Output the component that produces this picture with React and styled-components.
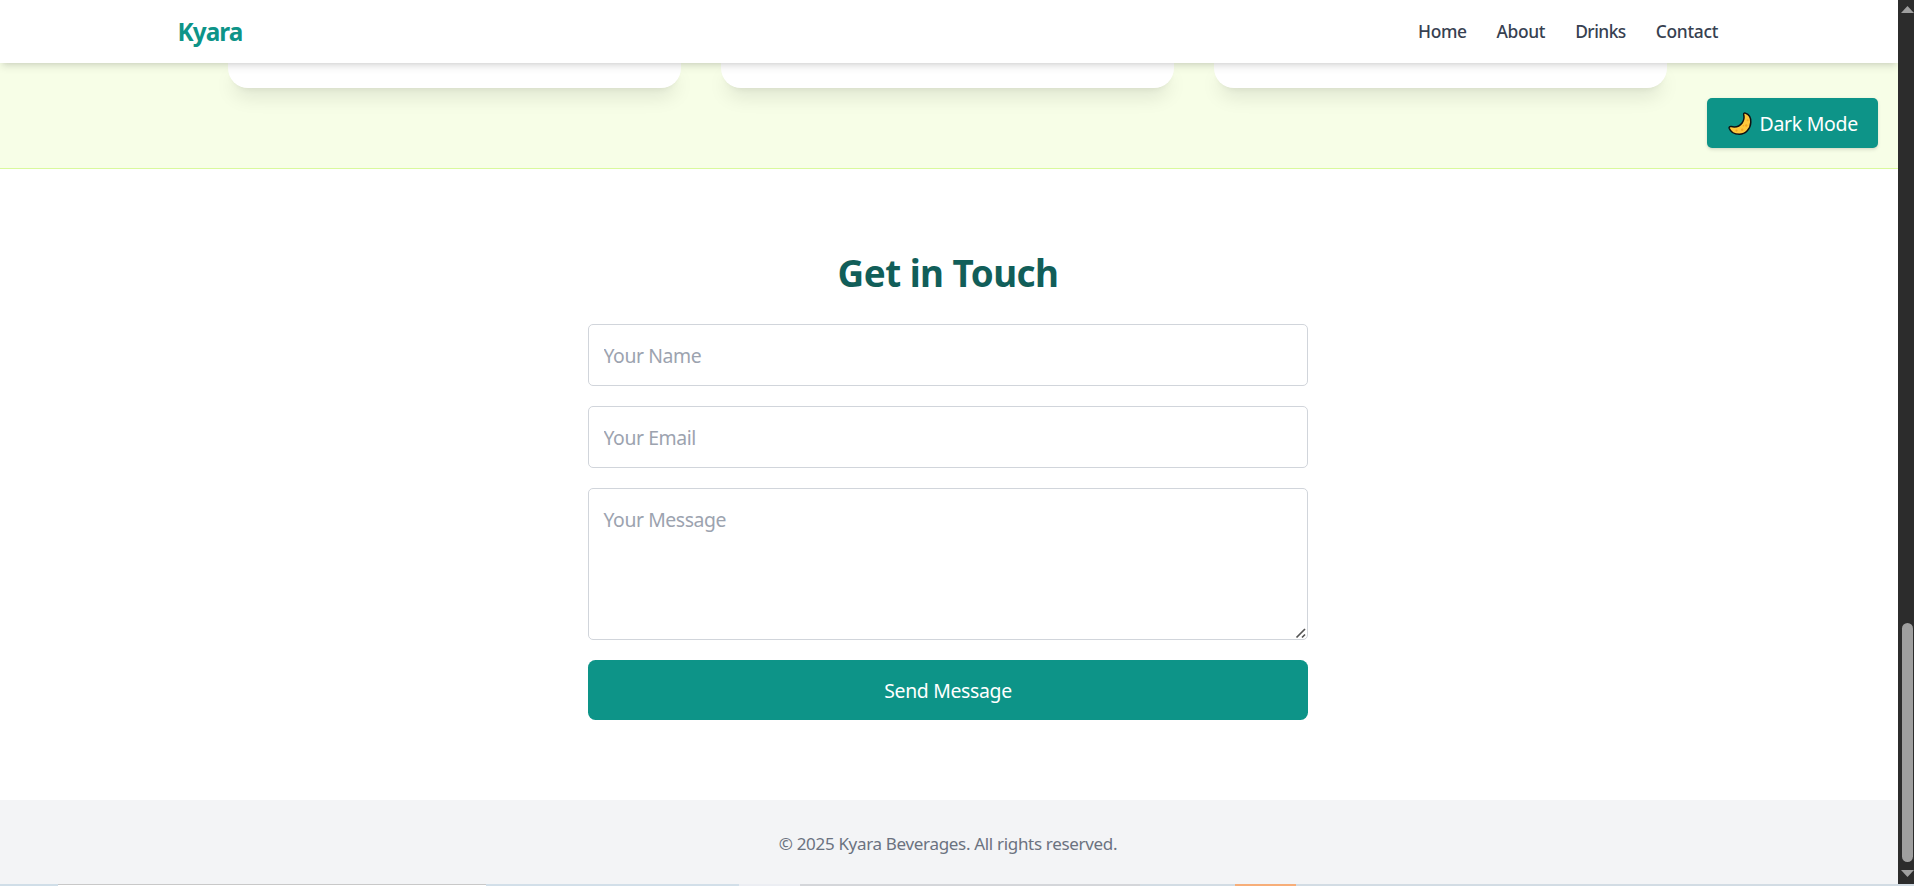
import React from "react";
import styled, { createGlobalStyle } from "styled-components";

const GlobalStyle = createGlobalStyle`
  *, *::before, *::after { box-sizing: border-box; }
  body { margin: 0; overflow: hidden; font-family: "Noto Sans", "Open Sans", sans-serif; background: #fff; }
  input, textarea, button { font: inherit; }
`;

const Screen = styled.div`
  display: flex;
  flex-direction: column;
  width: 1914px;
  height: 886px;
`;

const Viewport = styled.div`
  display: flex;
  height: 884px;
`;

const Page = styled.div`
  position: relative;
  flex: 1;
  display: flex;
  flex-direction: column;
  overflow: hidden;
`;

const Header = styled.header`
  position: relative;
  z-index: 2;
  flex: none;
  height: 63px;
  padding-right: 2px;
  background: #fff;
  box-shadow: 0 5px 7.5px -1.25px rgba(0, 0, 0, 0.1), 0 2.5px 5px -2.5px rgba(0, 0, 0, 0.1);
`;

const HeaderInner = styled.div`
  display: flex;
  align-items: center;
  justify-content: space-between;
  width: 1600px;
  height: 63px;
  margin: 0 auto;
  padding: 0 30px 0 29.5px;
`;

const Brand = styled.div`
  font-size: 24.3px;
  line-height: 35px;
  font-weight: 700;
  letter-spacing: -0.9px;
  color: #0d9488;
`;

const Nav = styled.nav`
  display: flex;
  gap: 30px;
`;

const NavLink = styled.a`
  font-size: 17.4px;
  line-height: 25px;
  font-weight: 500;
  color: #374151;
  letter-spacing: ${(p) => p.$track || 0}px;
`;

const Drinks = styled.section`
  flex: none;
  height: 106px;
  padding: 0 3px 80px 0;
  background: #f7fee7;
  border-bottom: 1px solid #d9f99d;
`;

const CardGrid = styled.div`
  display: grid;
  grid-template-columns: repeat(3, 1fr);
  gap: 40px;
  width: 1439px;
  height: 25px;
  margin: 0 auto;
`;

const Card = styled.div`
  background: #fff;
  border-radius: 0 0 20px 20px;
  box-shadow: 0 12.5px 18.75px -3.75px rgba(0, 0, 0, 0.1), 0 5px 7.5px -5px rgba(0, 0, 0, 0.1);
`;

const ThemeToggle = styled.button`
  position: absolute;
  z-index: 1;
  top: 98px;
  right: 20px;
  display: flex;
  align-items: center;
  gap: 7.5px;
  width: 171px;
  height: 50px;
  padding: 2px 0 0 21px;
  border: 0;
  border-radius: 5px;
  background: #0d9488;
  color: #fff;
  font-size: 19.5px;
  line-height: 30px;
  letter-spacing: -0.3px;
  white-space: nowrap;
  box-shadow: 0 1.25px 3.75px rgba(0, 0, 0, 0.1), 0 1.25px 2.5px -1.25px rgba(0, 0, 0, 0.1);
`;

const Contact = styled.section`
  flex: none;
  height: 631px;
  padding: 80px 2px 80px 0;
  background: #fff;
`;

const Form = styled.form`
  display: flex;
  flex-direction: column;
  gap: 20px;
  width: 720px;
  margin: 0 auto;
`;

const Title = styled.h2`
  margin: 0 0 10px;
  padding-top: 2px;
  height: 45px;
  font-size: 36.8px;
  line-height: 45px;
  font-weight: 700;
  letter-spacing: -0.52px;
  text-align: center;
  color: #115e59;
`;

const Input = styled.input`
  height: 62px;
  padding: 15px 14.5px;
  border: 1px solid #d1d5db;
  border-radius: 5px;
  font-size: 19.4px;
  line-height: 30px;
  letter-spacing: -0.42px;
  outline: 0;
  &::placeholder { color: #9ca3af; opacity: 1; }
`;

const MessageBox = styled.div`
  position: relative;
  display: flex;
`;

const TextArea = styled.textarea`
  flex: 1;
  height: 152px;
  padding: 16px 14.5px 15px;
  border: 1px solid #d1d5db;
  border-radius: 5px;
  font-size: 19.4px;
  line-height: 30px;
  letter-spacing: -0.42px;
  resize: none;
  outline: 0;
  &::placeholder { color: #9ca3af; opacity: 1; }
`;

const Grip = styled.svg`
  position: absolute;
  right: 1px;
  bottom: 1px;
`;

const Submit = styled.button`
  height: 60px;
  padding: 2px 0 0;
  border: 0;
  border-radius: 7.5px;
  background: #0d9488;
  color: #fff;
  font-size: 19.4px;
  line-height: 30px;
  letter-spacing: -0.32px;
`;

const Footer = styled.footer`
  flex: none;
  height: 84px;
  padding: 31px 2px 0 0;
  background: #f3f4f6;
  color: #6b7280;
  font-size: 17px;
  line-height: 25px;
  letter-spacing: -0.32px;
  text-align: center;
`;

const Scrollbar = styled.div`
  display: flex;
  flex-direction: column;
  align-items: flex-end;
  flex: none;
  width: 16px;
  padding: 6px 0 7px;
  background: #2c2c2c;
`;

const Arrow = styled.svg`
  display: block;
  flex: none;
`;

const Thumb = styled.div`
  width: 11px;
  height: 239px;
  margin: auto 1px 8px 0;
  border-radius: 6px;
  background: #9f9f9f;
`;

const Taskbar = styled.div`
  display: flex;
  height: 2px;
  background: #d2dce4;
`;

const Strip = styled.div`
  width: ${(p) => p.$w}px;
  height: 2px;
  background: ${(p) => p.$color};
  border-top: ${(p) => (p.$edge ? "1px solid " + p.$edge : "0")};
`;

const Moon = () => (
  <svg width="24" height="24" viewBox="0 0 24 24">
    <path
      d="M17.3 1.1C20.8 2.2 23 5.6 22.8 10.2C22.5 17 17.5 22.3 11.3 22.3C6.4 22.3 2.6 20 1.2 16.3C.8 15 1.8 14.3 3.2 14.6C7.8 15.5 11.8 14.2 14.1 11C16 8.3 16.4 5.5 15.7 2.5C15.5 1.4 16.2.8 17.3 1.1Z"
      fill="#ffc83d"
      stroke="#111"
      strokeWidth="1.5"
      strokeLinejoin="round"
    />
    <g fill="#f5a623">
      <circle cx="19.6" cy="8.3" r="1" />
      <circle cx="18.3" cy="13.5" r="1.2" />
      <circle cx="14.2" cy="17.8" r="1.2" />
      <circle cx="8.5" cy="18.6" r="1.1" />
      <circle cx="15.5" cy="13.8" r=".8" />
    </g>
  </svg>
);

export default function App() {
  return (
    <Screen>
      <GlobalStyle />
      <Viewport>
        <Page>
          <Header>
            <HeaderInner>
              <Brand>Kyara</Brand>
              <Nav>
                <NavLink $track={-0.4}>Home</NavLink>
                <NavLink $track={-0.35}>About</NavLink>
                <NavLink $track={-0.55}>Drinks</NavLink>
                <NavLink $track={-0.3}>Contact</NavLink>
              </Nav>
            </HeaderInner>
          </Header>
          <Drinks>
            <CardGrid>
              <Card />
              <Card />
              <Card />
            </CardGrid>
          </Drinks>
          <ThemeToggle type="button">
            <Moon />
            <span>Dark Mode</span>
          </ThemeToggle>
          <Contact>
            <Form>
              <Title>Get in Touch</Title>
              <Input placeholder="Your Name" />
              <Input placeholder="Your Email" />
              <MessageBox>
                <TextArea placeholder="Your Message" />
                <Grip width="12" height="12" viewBox="0 0 12 12" stroke="#555" strokeWidth="1.7">
                  <path d="M1.5 10.5L10 2M7 10.5L10 7.5" fill="none" />
                </Grip>
              </MessageBox>
              <Submit type="button">Send Message</Submit>
            </Form>
          </Contact>
          <Footer>© 2025 Kyara Beverages. All rights reserved.</Footer>
        </Page>
        <Scrollbar>
          <Arrow width="13" height="7" viewBox="0 0 13 7">
            <path d="M0 7L6.5 0L13 7Z" fill="#9f9f9f" />
          </Arrow>
          <Thumb />
          <Arrow width="13" height="7" viewBox="0 0 13 7">
            <path d="M0 0L6.5 7L13 0Z" fill="#9f9f9f" />
          </Arrow>
        </Scrollbar>
      </Viewport>
      <Taskbar>
        <Strip $w={58} $color="#d0dee8" />
        <Strip $w={428} $color="#fff" $edge="#c8c8c8" />
        <Strip $w={253} $color="#d2dfe9" />
        <Strip $w={61} $color="#eceef3" />
        <Strip $w={340} $color="#d4d6da" />
        <Strip $w={95} $color="#d2dce4" />
        <Strip $w={61} $color="#f7ae79" />
      </Taskbar>
    </Screen>
  );
}
